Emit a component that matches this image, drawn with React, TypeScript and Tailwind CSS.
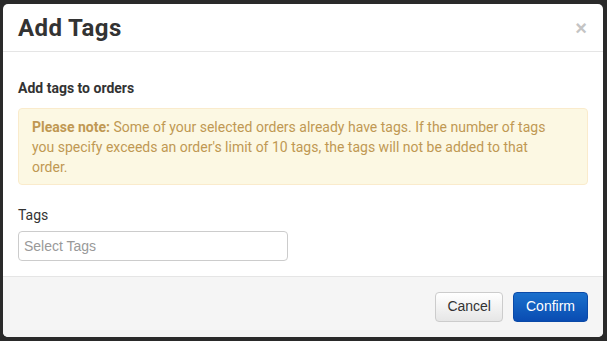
export default function App() {
  return (
    <div className="w-[607px] h-[341px] bg-[#2a2a2a] pt-[4px] pl-[3px] overflow-hidden">
      <div className="w-[600px] h-[333px] bg-white rounded-[5px] overflow-hidden flex flex-col font-['Roboto',sans-serif] text-[#333]">
        {/* header */}
        <div className="h-[48px] border-b border-[#e5e5e5] flex items-center justify-between pl-[15px] pr-[16px]">
          <h3 className="text-[24px] font-bold leading-none text-[#333] tracking-[0.4px]">Add Tags</h3>
          <span className="text-[#c4c4c4] text-[20px] font-bold leading-none font-['Liberation_Sans',sans-serif]">×</span>
        </div>

        {/* body */}
        <div className="flex-1 px-[15px] pt-[27px]">
          <div className="text-[14px] font-bold leading-[18px] text-[#333]">Add tags to orders</div>
          <div className="mt-[11px] h-[77px] bg-[#fcf8e3] border border-[#faebcc] rounded-[4px] pl-[13px] pr-[30px] pt-[8px]">
            <p className="text-[14px] leading-[20px] text-[#c09853]">
              <strong className="font-bold">Please note:</strong> Some of your selected orders already have tags. If the number of tags you specify exceeds an order's limit of 10 tags, the tags will not be added to that order.
            </p>
          </div>
          <div className="mt-[21px] text-[14px] leading-[18px] text-[#333]">Tags</div>
          <div className="mt-[7px] w-[270px] h-[30px] border border-[#ccc] rounded-[4px] flex items-center px-[5px] text-[14px] text-[#999] font-['Liberation_Sans',sans-serif]">
            Select Tags
          </div>
        </div>

        {/* footer */}
        <div className="h-[61px] border-t border-[#e5e5e5] bg-[#f5f5f5] flex items-center justify-end gap-[10px] pr-[15px] pb-[1px]">
          <button className="h-[30px] px-[11px] rounded-[4px] border border-[#ccc] bg-gradient-to-b from-white to-[#e6e6e6] text-[14px] text-[#333] font-['Liberation_Sans',sans-serif]">
            Cancel
          </button>
          <button className="h-[30px] px-[12px] rounded-[4px] border border-[#0b4aa8] bg-gradient-to-b from-[#1b70cc] to-[#0a4cb2] text-[14px] text-white font-['Liberation_Sans',sans-serif]">
            Confirm
          </button>
        </div>
      </div>
    </div>
  );
}
